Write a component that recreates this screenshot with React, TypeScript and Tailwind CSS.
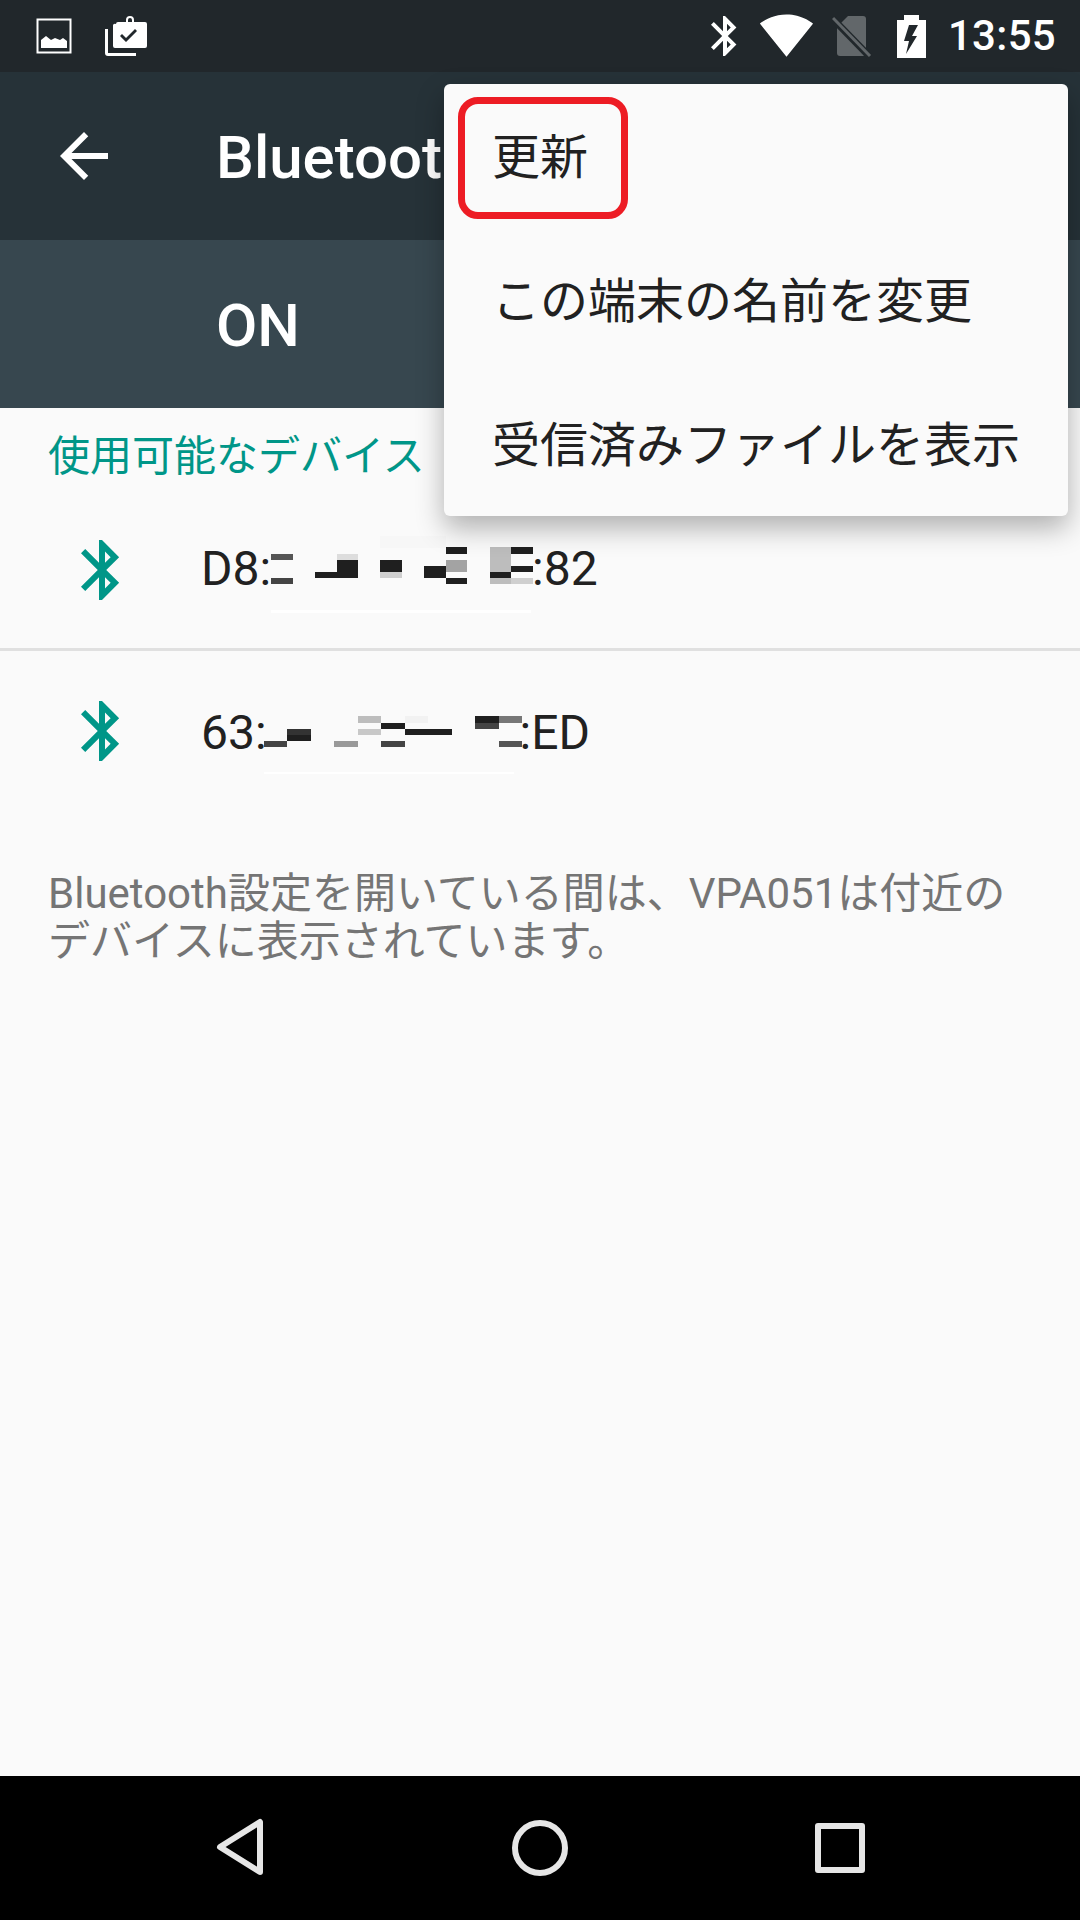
import React from 'react';

const BT_PATH =
  'M17.71 7.71L12 2h-1v7.59L6.41 5 5 6.41 10.59 12 5 17.59 6.41 19 11 14.41V22h1l5.71-5.71-4.3-4.29 4.3-4.29zM13 5.83l1.88 1.88L13 9.59V5.83zm1.88 10.46L13 18.17v-3.76l1.88 1.88z';

// x, y, w, h, colour of the mosaic cells that hide the addresses
const mosaicOne: [number, number, number, number, string][] = [
  [0, 15, 22, 6, '#555555'],
  [0, 39, 22, 6, '#444444'],
  [44, 33, 22, 6, '#1f1f1f'],
  [66, 15, 21, 6, '#dddddd'],
  [66, 21, 21, 18, '#1f1f1f'],
  [109, 21, 22, 12, '#1f1f1f'],
  [109, 33, 22, 6, '#cfcfcf'],
  [109, -3, 66, 12, '#f7f7f7'],
  [153, 27, 22, 12, '#1f1f1f'],
  [175, 8, 21, 7, '#1f1f1f'],
  [175, 21, 21, 12, '#a3a3a3'],
  [175, 39, 21, 6, '#1f1f1f'],
  [219, 8, 21, 25, '#bdbdbd'],
  [219, 33, 21, 6, '#1f1f1f'],
  [219, 39, 21, 6, '#bdbdbd'],
  [240, 8, 22, 7, '#1f1f1f'],
  [240, 27, 22, 6, '#1f1f1f'],
  [240, 39, 22, 6, '#cfcfcf'],
  [0, 71, 260, 3, '#ffffff'],
];

const mosaicTwo: [number, number, number, number, string][] = [
  [0, 38, 23, 6, '#444444'],
  [23, 26, 24, 6, '#333333'],
  [23, 32, 24, 6, '#1f1f1f'],
  [70, 38, 24, 6, '#999999'],
  [94, 13, 23, 7, '#bdbdbd'],
  [94, 26, 23, 6, '#c8c8c8'],
  [117, 20, 24, 6, '#1f1f1f'],
  [117, 38, 24, 6, '#444444'],
  [141, 13, 23, 7, '#f2f2f2'],
  [141, 26, 47, 6, '#1f1f1f'],
  [211, 13, 24, 7, '#1f1f1f'],
  [211, 20, 24, 6, '#444444'],
  [235, 13, 23, 7, '#777777'],
  [235, 38, 23, 6, '#555555'],
  [0, 69, 250, 2, '#ffffff'],
];

function BtIcon({ className }: { className: string }) {
  return (
    <svg viewBox="0 0 24 24" className={className} fill="currentColor">
      <path d={BT_PATH} />
    </svg>
  );
}

function Mosaic({ cells, width, className }: { cells: [number, number, number, number, string][]; width: number; className?: string }) {
  return (
    <svg width={width} height={60} viewBox={`0 0 ${width} 60`} className={`shrink-0 overflow-visible ${className ?? ''}`}>
      {cells.map((c, i) => (
        <rect key={i} x={c[0]} y={c[1]} width={c[2]} height={c[3]} fill={c[4]} />
      ))}
    </svg>
  );
}

function StatusBar() {
  return (
    <div className="flex h-[72px] items-center bg-[#21272b] text-white">
      <svg width="36" height="36" viewBox="0 0 36 36" className="ml-[36px]" fill="none">
        <rect x="1.5" y="1.5" width="33" height="33" stroke="white" strokeWidth="2" />
        <path d="M5 30V22l5-4 5 4 4-2 5 2 3-2 4 3v7z" fill="white" />
      </svg>
      <svg width="42" height="40" viewBox="0 0 42 40" className="ml-[33px]" fill="white">
        <path d="M0 13h3v24h28v3H3a3 3 0 0 1-3-3z" />
        <path
          fillRule="evenodd"
          d="M11 8a2 2 0 0 1 2-2h8V4a4 4 0 0 1 8 0v2h11a2 2 0 0 1 2 2v22a2 2 0 0 1-2 2H10a2 2 0 0 1-2-2V10a2 2 0 0 1 3-2zM23 4v2h4V4a2 2 0 0 0-4 0zM17 18l-2 2 6 6 11-11-2-2-9 9z"
        />
      </svg>
      <div className="ml-auto flex items-center pr-[24px]">
        <BtIcon className="h-[48px] w-[48px]" />
        <svg viewBox="0 0 24 24" className="ml-[10px] h-[55px] w-[55px] -translate-y-[1.5px]" fill="white">
          <path d="M12.01 21.49L23.64 7c-.45-.34-4.93-4-11.64-4C5.28 3 .81 6.66.36 7l11.63 14.49.01.01.01-.01z" />
        </svg>
        <svg width="40" height="44" viewBox="0 0 40 44" className="ml-[18px] translate-y-[1px]">
          <path d="M16 1h15a3 3 0 0 1 3 3v34a3 3 0 0 1-3 3H8a3 3 0 0 1-3-3V12z" fill="#62676a" />
          <path d="M1 4l37 38" stroke="#21272b" strokeWidth="7" />
          <path d="M1 3l37 38" stroke="#62676a" strokeWidth="3" />
        </svg>
        <svg width="29" height="43" viewBox="0 0 29 43" className="ml-[25px]" fill="white">
          <path
            fillRule="evenodd"
            d="M7 0h15v5h7v38H0V5h7zM12 10L7 26h5l-3 13 11-18h-5l6-11z"
          />
        </svg>
        <span className="ml-[22px] text-[42px] leading-none font-medium tracking-[0.3px]">13:55</span>
      </div>
    </div>
  );
}

function OverflowMenu() {
  const items = ['更新', 'この端末の名前を変更', '受信済みファイルを表示'];
  return (
    <div className="absolute top-[84px] left-[444px] w-[624px] rounded-[6px] bg-[#fafafa] shadow-[0_12px_28px_rgba(0,0,0,0.3)]">
      {items.map((item) => (
        <div key={item} className="flex h-[144px] items-center pt-[4px] pl-[48px] text-[48px] text-[#212121]">
          {item}
        </div>
      ))}
      <div className="absolute top-[13px] left-[14px] h-[122px] w-[170px] rounded-[20px] border-[7px] border-[#ed1c24]" />
    </div>
  );
}

function NavBar() {
  return (
    <div className="flex h-[144px] items-center justify-between bg-black px-[192px]">
      <svg width="96" height="96" viewBox="0 0 96 96" fill="none" stroke="#e6e6e6" strokeWidth="6" strokeLinejoin="round">
        <path d="M68 22v50L28 47z" />
      </svg>
      <svg width="96" height="96" viewBox="0 0 96 96" fill="none" stroke="#e6e6e6" strokeWidth="6">
        <circle cx="48" cy="48" r="25" />
      </svg>
      <svg width="96" height="96" viewBox="0 0 96 96" fill="none" stroke="#e6e6e6" strokeWidth="6" strokeLinejoin="round">
        <rect x="26" y="26" width="44" height="44" />
      </svg>
    </div>
  );
}

export default function App() {
  return (
    <div className="relative flex h-[1920px] w-[1080px] flex-col overflow-hidden bg-[#fafafa] font-['Roboto','Noto_Sans_CJK_JP',sans-serif]">
      <StatusBar />
      <div className="flex h-[168px] items-center bg-[#263238] text-white">
        <svg viewBox="0 0 24 24" className="ml-[48px] h-[72px] w-[72px]" fill="white">
          <path d="M20 11H7.83l5.59-5.59L12 4l-8 8 8 8 1.41-1.41L7.83 13H20v-2z" />
        </svg>
        <span className="ml-[96px] pt-[3px] text-[60px] font-medium">Bluetooth</span>
      </div>
      <div className="flex h-[168px] items-center bg-[#37474f] pt-[3px] pl-[216px] text-[60px] font-medium text-white">
        ON
      </div>

      <div className="flex-1">
        <div className="flex h-[94px] items-center pt-[2px] pl-[48px] text-[42px] text-[#009688]">使用可能なデバイス</div>
        <div className="flex h-[149px] items-start border-b-[3px] border-[#e0e0e0] pt-[32px] pl-[66px]">
          <BtIcon className="h-[72px] w-[72px] shrink-0 text-[#009688]" />
          <div className="ml-[63px] flex h-[70px] items-center text-[48px] text-[#212121]">
            D8:
            <Mosaic cells={mosaicOne} width={261} />
            :82
          </div>
        </div>
        <div className="flex items-start pt-[44px] pl-[66px]">
          <BtIcon className="h-[72px] w-[72px] shrink-0 text-[#009688]" />
          <div className="ml-[63px] flex h-[72px] items-center pt-[3px] text-[48px] text-[#212121]">
            63:
            <Mosaic cells={mosaicTwo} width={256} className="-ml-[3px]" />
            :ED
          </div>
        </div>
        <p className="mt-[103px] px-[48px] text-[42px] leading-[48px] text-[#757575]">
          Bluetooth設定を開いている間は、VPA051は付近のデバイスに表示されています。
        </p>
      </div>

      <NavBar />
      <OverflowMenu />
    </div>
  );
}
